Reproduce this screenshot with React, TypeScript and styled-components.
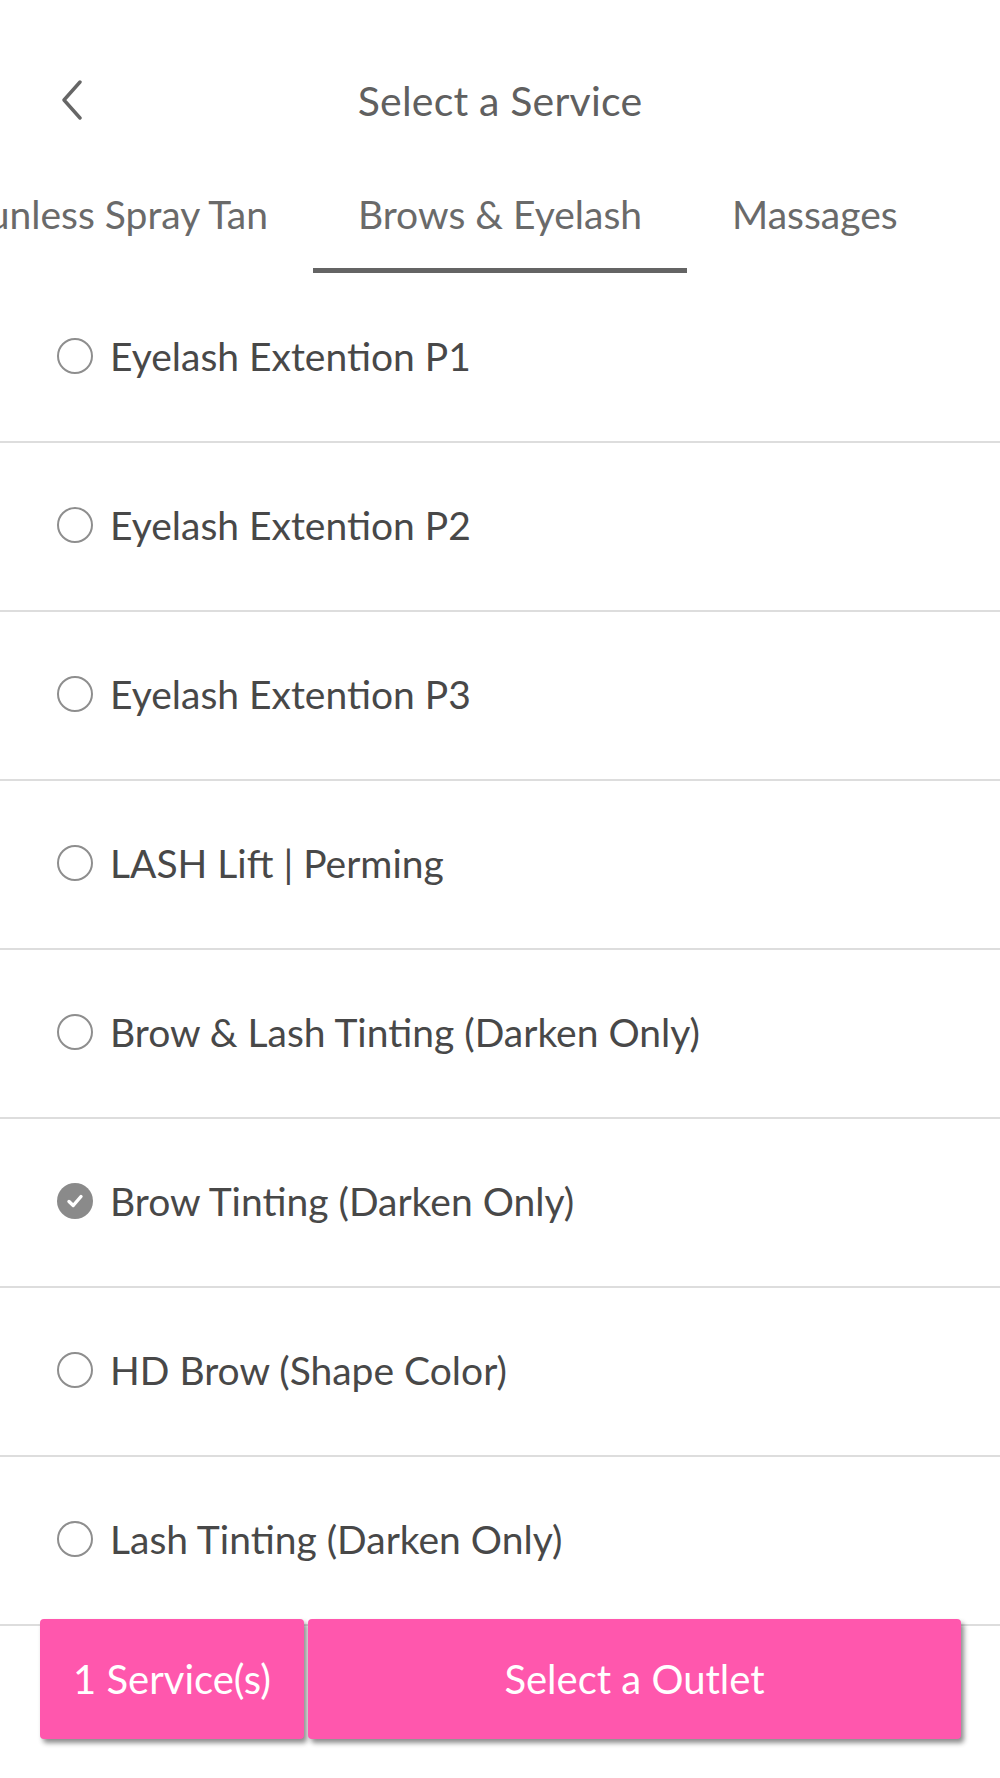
import React from "react";
import styled, { createGlobalStyle } from "styled-components";

const GlobalStyle = createGlobalStyle`
  html, body {
    margin: 0;
    padding: 0;
    background: #ffffff;
  }
  body {
    font-family: Lato, "Open Sans", "DejaVu Sans", sans-serif;
  }
`;

const Screen = styled.div`
  position: relative;
  width: 1000px;
  height: 1778px;
  overflow: hidden;
  background: #ffffff;
`;

const Header = styled.header`
  box-sizing: border-box;
  height: 190px;
  padding-top: 10px;
  display: grid;
  grid-template-columns: 1fr auto 1fr;
  align-items: center;
`;

const BackButton = styled.button`
  justify-self: start;
  margin-left: 52px;
  padding: 6px;
  border: none;
  background: transparent;
  display: flex;
  cursor: pointer;
`;

const Title = styled.h1`
  margin: 0;
  font-size: 41px;
  font-weight: 400;
  color: #606060;
  letter-spacing: 0.2px;
`;

const TabBar = styled.nav`
  display: grid;
  grid-template-columns: minmax(0, 1fr) auto minmax(0, 1fr);
  overflow: hidden;
`;

const Tab = styled.div<{ $active?: boolean; $side?: "start" | "end" }>`
  justify-self: ${(p) => (p.$side === "end" ? "end" : p.$side === "start" ? "start" : "center")};
  width: max-content;
  white-space: nowrap;
  padding: 0 45px 30px;
  line-height: 48px;
  font-size: 39px;
  color: #6a6a6a;
  border-bottom: 5px solid ${(p) => (p.$active ? "#646464" : "transparent")};
`;

const List = styled.ul`
  list-style: none;
  margin: 1px 0 0;
  padding: 0;
`;

const Row = styled.li`
  box-sizing: border-box;
  height: 169px;
  display: flex;
  align-items: center;
  gap: 17px;
  padding-left: 57px;
  padding-bottom: 3px;
  border-bottom: 2px solid #dddddd;
`;

const Radio = styled.span<{ $checked?: boolean }>`
  box-sizing: border-box;
  width: 36px;
  height: 36px;
  flex: none;
  border-radius: 50%;
  border: ${(p) => (p.$checked ? "none" : "2.5px solid #8e8e8e")};
  background: ${(p) => (p.$checked ? "#8a8a8a" : "transparent")};
  display: flex;
  align-items: center;
  justify-content: center;
`;

const Label = styled.span`
  font-size: 39px;
  color: #484848;
  white-space: nowrap;
`;

const ActionBar = styled.div`
  position: absolute;
  left: 40px;
  right: 39px;
  bottom: 39px;
  display: flex;
  gap: 4px;
`;

const PinkButton = styled.button<{ $grow?: boolean }>`
  height: 120px;
  ${(p) => (p.$grow ? "flex: 1;" : "width: 264px; flex: none;")}
  border: none;
  border-radius: 4px;
  background: #ff57ad;
  color: #ffffff;
  font-family: Lato, "Open Sans", sans-serif;
  font-size: 40px;
  box-shadow: 3px 4px 5px rgba(0, 0, 0, 0.45);
  cursor: pointer;
`;

const services = [
  { name: "Eyelash Extention P1" },
  { name: "Eyelash Extention P2" },
  { name: "Eyelash Extention P3" },
  { name: "LASH Lift | Perming" },
  { name: "Brow & Lash Tinting (Darken Only)" },
  { name: "Brow Tinting (Darken Only)", checked: true },
  { name: "HD Brow (Shape Color)" },
  { name: "Lash Tinting (Darken Only)" },
];

const App = () => {
  return (
    <Screen>
      <GlobalStyle />
      <Header>
        <BackButton aria-label="Back">
          <svg width="28" height="40" viewBox="0 0 28 40" fill="none">
            <path d="M22 2 L6 20 L22 38" stroke="#666" strokeWidth="3.4" strokeLinecap="round" strokeLinejoin="round" />
          </svg>
        </BackButton>
        <Title>Select a Service</Title>
        <span />
      </Header>

      <TabBar>
        <Tab $side="end">Sunless Spray Tan</Tab>
        <Tab $active>Brows &amp; Eyelash</Tab>
        <Tab $side="start">Massages</Tab>
      </TabBar>

      <List>
        {services.map((s) => (
          <Row key={s.name}>
            <Radio $checked={s.checked}>
              {s.checked && (
                <svg width="22" height="22" viewBox="0 0 22 22" fill="none">
                  <path d="M5 11.5 L9.2 15.5 L17 6.5" stroke="#fff" strokeWidth="3.4" strokeLinecap="round" strokeLinejoin="round" />
                </svg>
              )}
            </Radio>
            <Label>{s.name}</Label>
          </Row>
        ))}
      </List>

      <ActionBar>
        <PinkButton>1 Service(s)</PinkButton>
        <PinkButton $grow>Select a Outlet</PinkButton>
      </ActionBar>
    </Screen>
  );
};

export default App;
